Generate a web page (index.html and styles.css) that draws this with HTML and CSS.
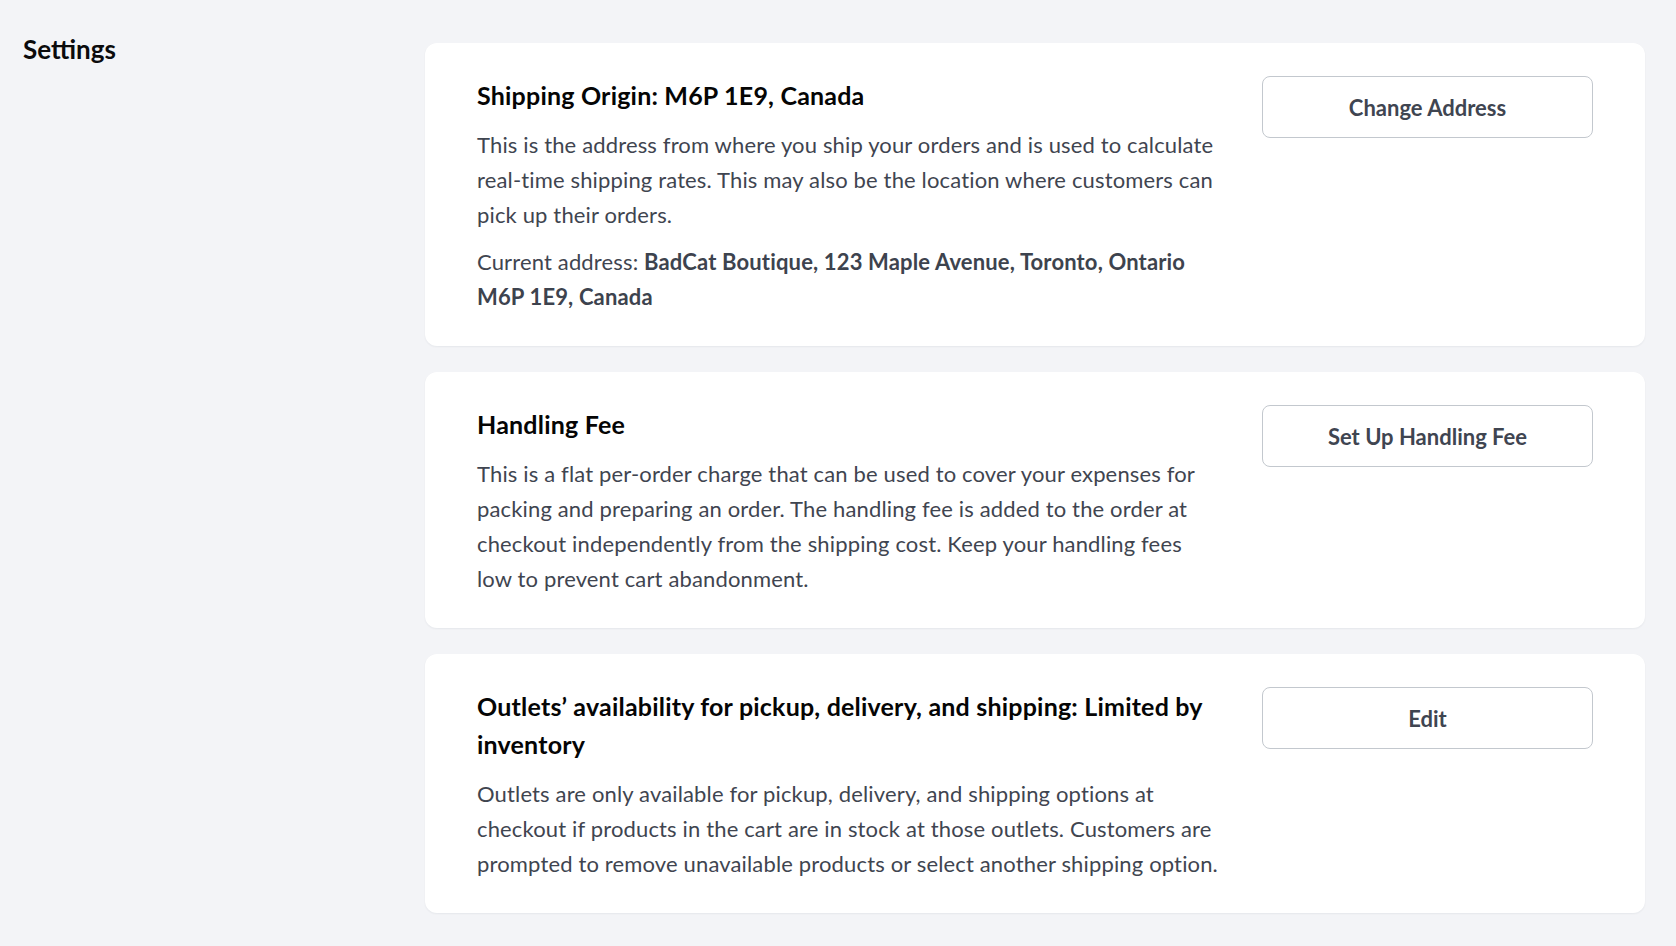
FILE: index.html
```html
<!DOCTYPE html>
<html lang="en">
<head>
    <meta charset="UTF-8">
    <meta name="viewport" content="width=device-width, initial-scale=1.0">
    <title>Settings</title>
    <link rel="stylesheet" href="styles.css">
</head>
<body>
    <div class="page">
        <aside class="sidebar">
            <h1>Settings</h1>
        </aside>

        <main class="cards">
            <section class="card">
                <div class="card-text">
                    <h2>Shipping Origin: M6P 1E9, Canada</h2>
                    <p>This is the address from where you ship your orders and is used to calculate real-time shipping rates. This may also be the location where customers can pick up their orders.</p>
                    <p>Current address: <strong>BadCat Boutique, 123 Maple Avenue, Toronto, Ontario M6P 1E9, Canada</strong></p>
                </div>
                <button class="btn">Change Address</button>
            </section>

            <section class="card">
                <div class="card-text">
                    <h2>Handling Fee</h2>
                    <p>This is a flat per-order charge that can be used to cover your expenses for packing and preparing an order. The handling fee is added to the order at checkout independently from the shipping cost. Keep your handling fees low to prevent cart abandonment.</p>
                </div>
                <button class="btn">Set Up Handling Fee</button>
            </section>

            <section class="card">
                <div class="card-text">
                    <h2>Outlets’ availability for pickup, delivery, and shipping: Limited by inventory</h2>
                    <p>Outlets are only available for pickup, delivery, and shipping options at checkout if products in the cart are in stock at those outlets. Customers are prompted to remove unavailable products or select another shipping option.</p>
                </div>
                <button class="btn">Edit</button>
            </section>
        </main>
    </div>
</body>
</html>
```

FILE: styles.css
```css
body {
    margin: 0;
    padding: 0;
    background-color: #f3f4f7;
    font-family: Lato, "Open Sans", sans-serif;
}

.page {
    display: grid;
    grid-template-columns: 402px 1fr;
    padding: 0 31px 0 23px;
}

.sidebar h1 {
    margin: 0;
    padding-top: 33px;
    font-size: 26px;
    line-height: 32px;
    font-weight: 700;
    color: #0b0b0c;
}

.cards {
    display: flex;
    flex-direction: column;
    gap: 26px;
    padding: 43px 0 33px;
}

.card {
    display: flex;
    align-items: flex-start;
    gap: 42px;
    background-color: #fff;
    border-radius: 12px;
    padding: 33px 52px 32px;
    box-shadow: 0 1px 2px rgba(20, 30, 50, 0.06);
}

.card-text {
    flex: 1;
}

.card h2 {
    margin: 0 0 13px;
    font-size: 25px;
    line-height: 38px;
    letter-spacing: 0.2px;
    font-weight: 700;
    color: #050505;
}

.card p {
    margin: 0;
    font-size: 22px;
    line-height: 35px;
    letter-spacing: 0.15px;
    color: #3f4550;
}

.card p + p {
    margin-top: 12px;
}

.card strong {
    font-weight: 700;
    color: #3d434e;
}

.btn {
    flex-shrink: 0;
    width: 331px;
    height: 62px;
    background-color: #fff;
    border: 1.5px solid #c3c8ce;
    border-radius: 8px;
    font-family: inherit;
    font-size: 22px;
    font-weight: 700;
    color: #3f4551;
    cursor: pointer;
}
```
